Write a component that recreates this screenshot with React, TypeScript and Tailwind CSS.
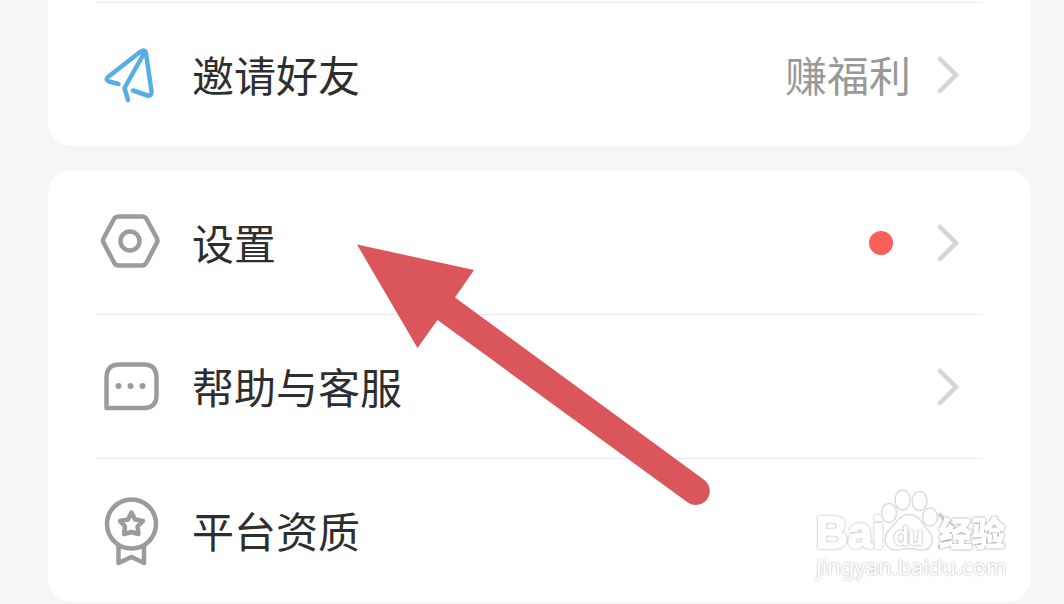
import type { ReactNode } from "react";

const iconProps = {
  width: 60,
  height: 72,
  viewBox: "0 0 60 72",
  fill: "none",
  stroke: "#9b9b9b",
  strokeWidth: 4.5,
  strokeLinecap: "round" as const,
  strokeLinejoin: "round" as const,
  "aria-hidden": true,
};

function PlaneIcon() {
  return (
    <svg {...iconProps} stroke="#55aee6">
      <path d="M18.500 45L9 42.500Q5 41 8 38L40 13Q45 9.500 46 14.500L51.500 52Q52 57.500 47.500 56.500L33 51.500" />
      <path d="M44.500 13.500L24.500 49L28 61" />
    </svg>
  );
}

function SettingsIcon() {
  return (
    <svg {...iconProps}>
      <path d="M18.500 9.500H42Q45 9.500 46.500 12L56.500 30.500Q58.500 33.500 56.500 36.500L46.500 55.500Q45 58.500 42 58.500H18.500Q15.500 58.500 14 55.500L4 36.500Q2 33.500 4 30.500L14 12Q15.500 9.500 18.500 9.500Z" />
      <circle cx="30" cy="34" r="9.500" />
    </svg>
  );
}

function HelpIcon() {
  return (
    <svg {...iconProps}>
      <path d="M6.500 57V27Q6.500 13.500 19.500 13.500H44Q56.500 13.500 56.500 27V44Q56.500 57 44 57Z" />
      <g fill="#9b9b9b" stroke="none">
        <circle cx="18.500" cy="35" r="3" />
        <circle cx="30.500" cy="35" r="3" />
        <circle cx="42.500" cy="35" r="3" />
      </g>
    </svg>
  );
}

function MedalIcon() {
  return (
    <svg {...iconProps}>
      <circle cx="31.500" cy="29" r="24.500" />
      <path d="M31.500 17.500L35 24.500L43 26L37.500 31.500L38.500 39L31.500 37L24 39L25 31.500L20 26L28 24.500Z" />
      <path d="M18.500 51.500V68L31.500 62L44 68V51.500" />
    </svg>
  );
}

function Chevron() {
  return (
    <svg width="24" height="40" viewBox="0 0 24 40" fill="none" stroke="#d4d4d4" strokeWidth="4.500" strokeLinecap="round" aria-hidden="true">
      <path d="M5 4L21 20L5 36" />
    </svg>
  );
}

function Row({ icon, label, children }: { icon: ReactNode; label: string; children?: ReactNode }) {
  return (
    <li>
      <a href="#" className="flex h-[143px] items-center">
        <span className="ml-1 shrink-0">{icon}</span>
        <span className="ml-8 grow pb-0.5 text-[42px] leading-[60px] text-[#2e2e2e]">{label}</span>
        {children}
        <span className="mr-6 ml-6 shrink-0">
          <Chevron />
        </span>
      </a>
    </li>
  );
}

function PointerArrow() {
  return (
    <svg className="pointer-events-none absolute top-[244px] left-[357px]" width="356" height="264" viewBox="0 0 356 264" aria-hidden="true">
      <path
        d="M0 0.500L117 26L98 53.500L346 235A14 14 0 0 1 331.500 259L80.500 76L60.500 104Z"
        fill="#db565b"
      />
    </svg>
  );
}

function Watermark() {
  return (
    <div className="pointer-events-none absolute top-[488px] right-[56px] w-[192px] text-white" aria-label="Baidu 经验">
      <div className="flex h-[64px] items-end">
        <span className="w-[65px] font-['Liberation_Sans',sans-serif] text-[44px] leading-[38px] font-bold [filter:drop-shadow(0_0_1px_#aaa)] [-webkit-text-stroke:2px_#fff]">
          Bai
        </span>
        <span className="relative h-[64px] w-[58px] shrink-0">
          <svg width="58" height="64" viewBox="0 0 58 64" fill="#fff" stroke="#dcdcdc" strokeWidth="1.500" aria-hidden="true">
            <ellipse cx="8" cy="25" rx="7.500" ry="9.500" />
            <ellipse cx="21.500" cy="12" rx="7.500" ry="10" />
            <ellipse cx="38.500" cy="13" rx="7.500" ry="9.500" />
            <ellipse cx="49" cy="29" rx="7.500" ry="9" />
            <path d="M28 26.500C38 26.500 40 34 46 41C54 49 53 62 41 62C36 62 34 60.500 28 60.500C22 60.500 19 62.500 14 62C2 61 2 48 9 41C16 35 18 26.500 28 26.500Z" />
          </svg>
          <span className="absolute top-[34px] left-[13px] font-['Liberation_Sans',sans-serif] text-[26px] leading-[28px] [filter:drop-shadow(0_0_1px_#999)] [-webkit-text-stroke:1px_#fff]">
            du
          </span>
        </span>
        <span className="shrink-0 text-[33px] leading-[40px] font-black [filter:drop-shadow(0_0_1px_#888)] [-webkit-text-stroke:1px_#fff]">
          经验
        </span>
      </div>
      <div className="pt-0.5 font-['Noto_Sans',sans-serif] text-[22px] leading-[24px] [filter:drop-shadow(0_0_1px_#aaa)]">
        jingyan.baidu.com
      </div>
    </div>
  );
}

export default function App() {
  return (
    <main className="relative min-h-screen bg-[#f6f6f6] pr-[33px] pl-12 font-['Noto_Sans_CJK_SC',sans-serif]">
      <ul className="rounded-b-3xl bg-white px-12 pt-[2px]">
        <li className="border-t border-[#ececec]" aria-hidden="true" />
        <Row icon={<PlaneIcon />} label="邀请好友">
          <span className="pb-0.5 text-[42px] leading-[60px] text-[#999]">赚福利</span>
        </Row>
      </ul>
      <ul className="mt-6 divide-y divide-[#ececec] rounded-3xl bg-white px-12 pt-px">
        <Row icon={<SettingsIcon />} label="设置">
          <span className="mr-[18px] size-6 rounded-full bg-[#fc5e5a]" />
        </Row>
        <Row icon={<HelpIcon />} label="帮助与客服" />
        <Row icon={<MedalIcon />} label="平台资质" />
      </ul>
      <PointerArrow />
      <Watermark />
    </main>
  );
}
